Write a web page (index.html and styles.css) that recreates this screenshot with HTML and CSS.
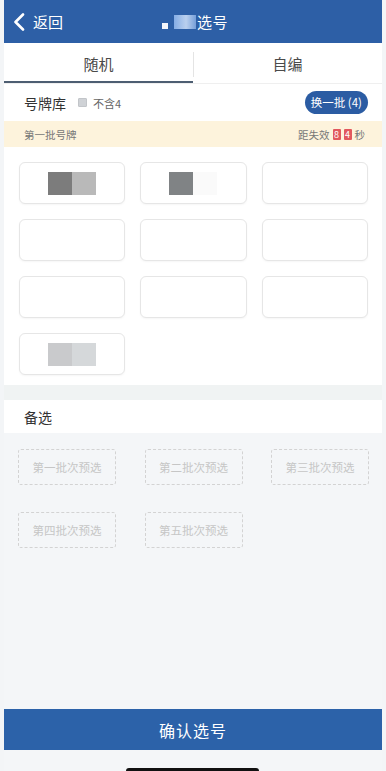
FILE: index.html
```html
<!DOCTYPE html>
<html lang="zh">
<head>
<meta charset="utf-8">
<title>选号</title>
<link rel="stylesheet" href="styles.css">
</head>
<body>
<div class="app">
  <header class="topbar">
    <div class="back">
      <svg class="back-icon" width="12" height="18" viewBox="0 0 12 18"><path d="M10 1.5 L2.5 9 L10 16.5" fill="none" stroke="#fff" stroke-width="2.6" stroke-linecap="round" stroke-linejoin="round"/></svg>
      <span>返回</span>
    </div>
    <div class="title">
      <span class="blur-a"></span><span class="blur-b"></span><span class="title-text">选号</span>
    </div>
    <div></div>
  </header>

  <nav class="tabs">
    <div class="tab active">随机</div>
    <div class="tab">自编</div>
  </nav>

  <div class="pool-row">
    <div class="pool-left">
      <span class="pool-title">号牌库</span>
      <span class="check"></span>
      <span class="check-label">不含4</span>
    </div>
    <button class="swap">换一批 (4)</button>
  </div>

  <div class="batch-bar">
    <span>第一批号牌</span>
    <span class="countdown">距失效 <b class="digit">8</b><b class="digit">4</b> 秒</span>
  </div>

  <section class="plates">
    <div class="plate"><span class="blk dark"></span><span class="blk mid"></span></div>
    <div class="plate"><span class="blk dark2"></span><span class="blk faint"></span></div>
    <div class="plate"></div>
    <div class="plate"></div>
    <div class="plate"></div>
    <div class="plate"></div>
    <div class="plate"></div>
    <div class="plate"></div>
    <div class="plate"></div>
    <div class="plate"><span class="blk light1"></span><span class="blk light2"></span></div>
  </section>

  <div class="band"></div>

  <div class="alt-head">备选</div>

  <section class="alt-area">
    <div class="alt-grid">
      <div class="alt-box">第一批次预选</div>
      <div class="alt-box">第二批次预选</div>
      <div class="alt-box">第三批次预选</div>
      <div class="alt-box">第四批次预选</div>
      <div class="alt-box">第五批次预选</div>
    </div>
  </section>

  <button class="confirm">确认选号</button>

  <div class="home"><span class="home-bar"></span></div>
</div>
</body>
</html>
```

FILE: styles.css
```css
* { box-sizing: border-box; }
html, body { margin: 0; padding: 0; }
body {
  background: #f3f5f7;
  font-family: "Noto Sans CJK SC", "Noto Sans", sans-serif;
  width: 386px;
  height: 771px;
  overflow: hidden;
}
.app {
  width: 378px;
  margin: 0 4px;
  height: 771px;
  display: flex;
  flex-direction: column;
  background: #f4f6f8;
}

/* header */
.topbar {
  height: 43px;
  background: #2d5fa6;
  display: grid;
  grid-template-columns: 1fr auto 1fr;
  align-items: center;
  color: #fff;
}
.back {
  display: flex;
  align-items: center;
  gap: 8px;
  padding-left: 9px;
  font-size: 15px;
}
.title {
  display: flex;
  align-items: center;
  font-size: 15px;
  padding-left: 4px;
}
.blur-a {
  width: 6px; height: 6px;
  background: #f4f6fb;
  margin-top: 9px;
  margin-right: 6px;
}
.blur-b {
  width: 22px; height: 14px;
  background: linear-gradient(90deg, #8fb6ec, #c9dcf6 55%, #7ea6de);
  margin-right: 1px;
  opacity: 0.9;
}
.title-text { letter-spacing: 0.5px; }

/* tabs */
.tabs {
  display: flex;
  height: 41px;
  background: #fff;
  border-bottom: 1px solid #efefef;
}
.tab {
  flex: 1;
  display: flex;
  align-items: center;
  justify-content: center;
  font-size: 15px;
  color: #4a4a4a;
  position: relative;
}
.tab + .tab::before {
  content: "";
  position: absolute;
  left: 0; top: 9px; bottom: 6px;
  width: 1px;
  background: #e4e4e4;
}
.tab.active { border-bottom: 2px solid #4d5e72; padding-top: 2px; }

/* pool row */
.pool-row {
  height: 37px;
  background: #fff;
  display: flex;
  align-items: center;
  justify-content: space-between;
  padding: 0 14px 0 20px;
}
.pool-left { display: flex; align-items: center; }
.pool-title { font-size: 14px; color: #333; margin-right: 12px; }
.check {
  width: 9px; height: 9px;
  background: #cfd2d6;
  border: 1px solid #c2c5c9;
  border-radius: 1px;
  margin-right: 6px;
}
.check-label { font-size: 11px; color: #666; }
.swap {
  border: 0;
  background: #2b5ca3;
  color: #fff;
  font-family: inherit;
  font-size: 11.5px;
  height: 23px;
  padding: 0 6px;
  border-radius: 12px;
  line-height: 23px;
}

/* batch bar */
.batch-bar {
  height: 26px;
  background: #fdf3dc;
  display: flex;
  align-items: center;
  justify-content: space-between;
  padding: 0 17px 0 20px;
  font-size: 10.5px;
  color: #777;
}
.countdown { display: flex; align-items: center; gap: 3px; }
.digit {
  display: inline-block;
  width: 8px; height: 11px;
  background: #e2585d;
  color: #fff;
  font-weight: normal;
  font-size: 9px;
  line-height: 11px;
  text-align: center;
  border-radius: 1px;
}

/* plates */
.plates {
  background: #fff;
  padding: 15px 14px 10px 15px;
  display: grid;
  grid-template-columns: repeat(3, 1fr);
  column-gap: 15px;
  row-gap: 15px;
}
.plate {
  height: 42px;
  border: 1px solid #e6e6e6;
  border-radius: 6px;
  box-shadow: 0 1px 2px rgba(0,0,0,0.04);
  display: flex;
  align-items: center;
  justify-content: center;
  background: #fff;
}
.blk { width: 24px; height: 23px; }
.blk.dark { background: #7c7c7c; }
.blk.mid { background: #b9b9b9; }
.blk.dark2 { background: #808385; }
.blk.faint { background: #fafafa; }
.blk.light1 { background: #c9cacc; }
.blk.light2 { background: #d5d8da; }

.band { height: 15px; background: #f0f3f3; }

.alt-head {
  height: 33px;
  background: #fff;
  display: flex;
  align-items: center;
  padding-left: 20px;
  font-size: 14px;
  color: #333;
}

.alt-area {
  flex: 1;
  background: #f4f6f8;
  padding: 16px 13px 0 14px;
}
.alt-grid {
  display: grid;
  grid-template-columns: repeat(3, 98px);
  justify-content: space-between;
  row-gap: 27px;
}
.alt-box {
  height: 36px;
  border: 1px dashed #d3d3d3;
  border-radius: 3px;
  display: flex;
  align-items: center;
  justify-content: center;
  font-size: 11.5px;
  color: #c6c6c6;
}

.confirm {
  height: 41px;
  border: 0;
  width: 100%;
  background: #2c62a9;
  color: #fff;
  font-family: inherit;
  font-size: 16px;
  letter-spacing: 1px;
}

.home {
  height: 21px;
  background: #f4f6f8;
  display: flex;
  justify-content: center;
  padding-top: 18px;
}
.home-bar {
  width: 133px;
  height: 6px;
  background: #111;
  border-radius: 3px;
  margin-left: -1px;
}
```
